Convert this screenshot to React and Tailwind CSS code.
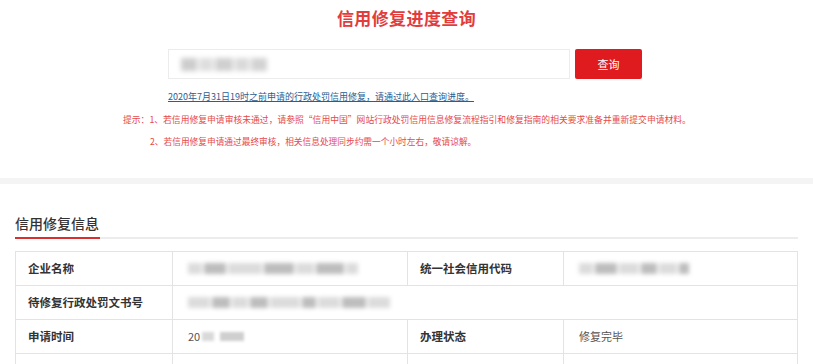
import React from 'react'

const FONT = { fontFamily: '"Noto Sans CJK SC", "Noto Sans", sans-serif' }

// blurred placeholder in place of masked values
function Masked({ widths }) {
  return (
    <div className="flex items-center gap-[2px] blur-[2px]">
      {widths.map((w, i) => (
        <span
          key={i}
          className={`h-[11px] ${i % 2 ? 'bg-[#bdbdbd]' : 'bg-[#dcdcdc]'}`}
          style={{ width: w }}
        />
      ))}
    </div>
  )
}

function Label({ children }) {
  return (
    <div className="h-[34px] flex items-center pl-[12px] text-[11.5px] font-bold text-[#333] border-l border-t border-[#e3e3e3]">
      {children}
    </div>
  )
}

function Cell({ children, span, right }) {
  return (
    <div
      className={`h-[34px] flex items-center pl-[15px] text-[11px] text-[#555] border-l border-t border-[#e3e3e3] ${span ? 'col-span-3' : ''} ${right ? 'border-r' : ''}`}
    >
      {children}
    </div>
  )
}

export default function App() {
  return (
    <div className="w-[813px] h-[364px] overflow-hidden bg-white" style={FONT}>
      {/* query section */}
      <div className="h-[178px] pt-[8px]">
        <h1 className="text-center text-[17px] leading-[19px] font-bold text-[#e23c3c] tracking-[0.4px]">
          信用修复进度查询
        </h1>

        <div className="flex mt-[22px] ml-[168px]">
          <div className="w-[402px] h-[30px] border border-[#ececec] flex items-center pl-[12px]">
            <div className="blur-[2.5px] flex gap-[2px]">
              <span className="w-[16px] h-[13px] bg-[#cdcdcd]" />
              <span className="w-[14px] h-[13px] bg-[#dedede]" />
              <span className="w-[18px] h-[13px] bg-[#d0d0d0]" />
              <span className="w-[14px] h-[13px] bg-[#dadada]" />
              <span className="w-[16px] h-[13px] bg-[#d3d3d3]" />
            </div>
          </div>
          <button className="ml-[5px] w-[67px] h-[30px] rounded-[2px] bg-[#e01b20] text-white text-[11px] flex items-center justify-center">
            查询
          </button>
        </div>

        <div className="mt-[12px] ml-[168px] text-[9px] leading-[12px] text-[#2b5d91] underline">
          2020年7月31日19时之前申请的行政处罚信用修复，请通过此入口查询进度。
        </div>

        <div className="mt-[11px] pl-[123px] text-[8.8px] leading-[12px] text-[#e64a4a]">
          提示：1、若信用修复申请审核未通过，请参照“信用中国”网站行政处罚信用信息修复流程指引和修复指南的相关要求准备并重新提交申请材料。
        </div>
        <div className="mt-[10px] pl-[150px] text-[8.7px] leading-[12px] text-[#e64a4a]">
          2、若信用修复申请通过最终审核，相关信息处理同步约需一个小时左右，敬请谅解。
        </div>
      </div>

      <div className="h-[6px] bg-[#f4f4f4]" />

      {/* info section */}
      <div className="px-[15px] pt-[31px]">
        <div className="text-[14px] leading-[16px] font-medium text-[#333]">信用修复信息</div>
        <div className="mt-[6px] h-[2px] bg-[#ececec]">
          <div className="w-[85px] h-[2px] bg-[#d9302f]" />
        </div>

        <div className="mt-[12px] grid grid-cols-[157px_235px_156px_235px]">
          <Label>企业名称</Label>
          <Cell><Masked widths={[14, 22, 34, 30, 18, 28, 12]} /></Cell>
          <Label>统一社会信用代码</Label>
          <Cell right><Masked widths={[14, 22, 20, 16, 18, 10]} /></Cell>

          <Label>待修复行政处罚文书号</Label>
          <Cell span right><Masked widths={[22, 18, 16, 18, 30, 14, 22, 24, 22]} /></Cell>

          <Label>申请时间</Label>
          <Cell>
            <span className="flex items-center">
              <span>20</span>
              <span className="ml-[2px] w-[12px] h-[9px] bg-[#d9d9d9] blur-[1.5px]" />
              <span className="ml-[6px] w-[24px] h-[9px] bg-[#cfcfcf] blur-[1.5px]" />
            </span>
          </Cell>
          <Label>办理状态</Label>
          <Cell right>修复完毕</Cell>

          <Label></Label>
          <Cell></Cell>
          <Label></Label>
          <Cell right></Cell>
        </div>
      </div>
    </div>
  )
}
